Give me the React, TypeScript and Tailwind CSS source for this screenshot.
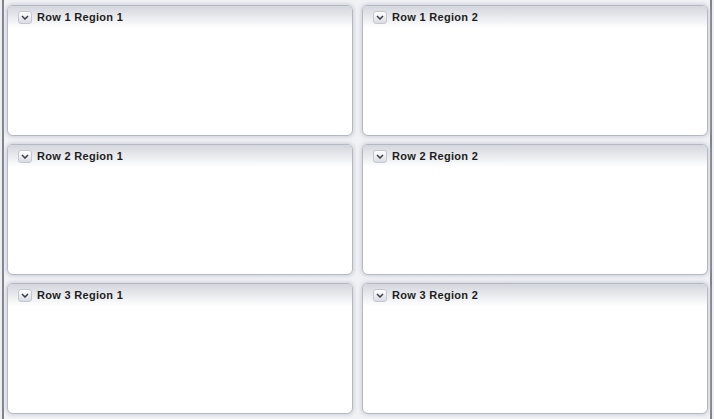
const regions = [
  ['Row 1 Region 1', 'Row 1 Region 2'],
  ['Row 2 Region 1', 'Row 2 Region 2'],
  ['Row 3 Region 1', 'Row 3 Region 2'],
];

function Chevron() {
  return (
    <span className="flex h-[13px] w-[14px] items-center justify-center rounded-[3px] border border-[#c3c7cf] bg-gradient-to-b from-[#ffffff] to-[#d9dce3]">
      <svg width="8" height="5" viewBox="0 0 8 5">
        <path d="M1 1 L4 4 L7 1" fill="none" stroke="#3a3d45" strokeWidth="1.5" />
      </svg>
    </span>
  );
}

function Panel({title}: {title: string}) {
  return (
    <div className="flex flex-col rounded-[6px] border border-[#b4b8c1] bg-white shadow-[0_0_3px_2px_rgba(200,204,214,0.6)] overflow-hidden">
      <div className="flex h-[22px] items-center gap-[5px] bg-gradient-to-b from-[#d3d6dd] to-[#ffffff] pl-[10px]">
        <Chevron />
        <span className="text-[11px] font-bold tracking-[0.3px] text-[#1e1e22] font-['Liberation_Sans',Arial,sans-serif]">{title}</span>
      </div>
      <div className="flex-1" />
    </div>
  );
}

export default function App() {
  return (
    <div className="flex h-[419px] w-[714px] bg-[#eceef2] pl-[2px] pr-[2px]">
      <div className="flex-1 border-l-2 border-r-2 border-[#80838c] bg-[#f1f2f5] pl-[3px] pr-[2px] py-[5px]">
        <div className="grid h-full grid-cols-2 grid-rows-3 gap-x-[9px] gap-y-[8px]">
          {regions.flat().map((t) => (
            <Panel key={t} title={t} />
          ))}
        </div>
      </div>
    </div>
  );
}
